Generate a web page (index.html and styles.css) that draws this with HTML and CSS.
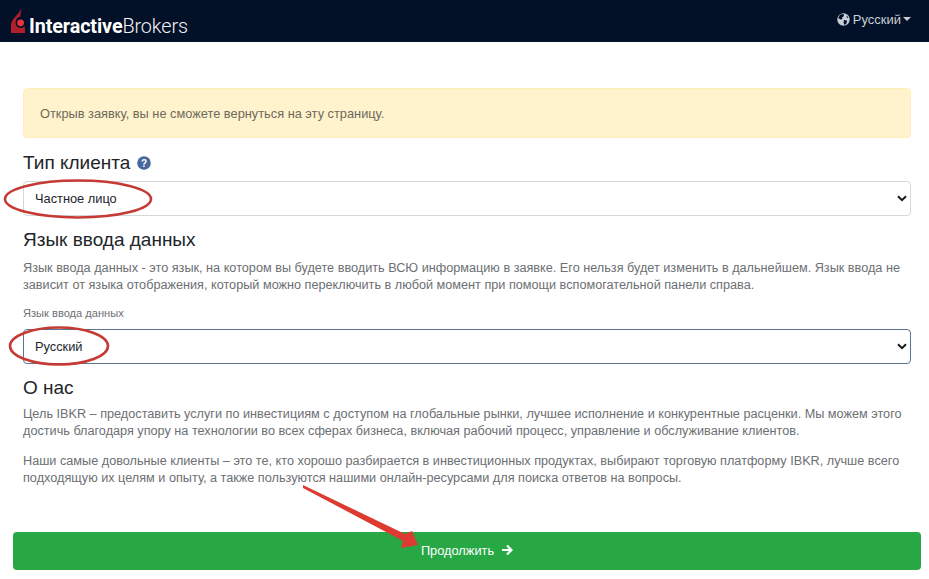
FILE: index.html
```html
<!DOCTYPE html>
<html lang="ru">
<head>
<meta charset="utf-8">
<title>Interactive Brokers</title>
<link rel="stylesheet" href="styles.css">
</head>
<body>
<header class="topbar">
  <div class="brand">
    <svg class="brand-mark" width="15" height="26" viewBox="0 0 15 26"><path d="M10.5 0 C10 3 9.5 6 9.3 8.5 C6.5 9 4.6 11.5 4.6 14.8 C4.6 17.8 7 20 9.6 20 C11.4 20 12.9 19.2 13.8 18 L14 25 L0 25 L0 16 C1 10.5 7.5 7 10.5 0 Z" fill="#b01f2c"/><circle cx="9.6" cy="14.8" r="3.4" fill="#ee3340"/></svg>
    <span class="brand-name"><b>Interactive</b>Brokers</span>
  </div>
  <div class="lang">
    <svg width="13" height="13" viewBox="0 0 13 13"><circle cx="6.5" cy="6.5" r="6.2" fill="#c9ced6"/><path d="M3 1.5 L6.5 1 L7 3 L5 4.5 L5.5 6 L3.5 6.5 L1.2 5 Z M7 7 L10 7.5 L9.5 10.5 L7.5 12 L6.5 9.5 Z M9.5 2.5 L11.5 4.5 L10 5 Z" fill="#021028"/></svg>
    <span>Русский</span>
    <i class="caret"></i>
  </div>
</header>
<main class="page">
  <div class="alert">Открыв заявку, вы не сможете вернуться на эту страницу.</div>
  <h2 class="title title-first">Тип клиента
    <svg class="help" width="14" height="14" viewBox="0 0 14 14"><circle cx="7" cy="7" r="6.8" fill="#47689c"/><text x="7" y="11" text-anchor="middle" class="help-mark">?</text></svg>
  </h2>
  <div class="field">
    <select class="select"><option>Частное лицо</option></select>
    <svg class="chevron" width="10" height="7" viewBox="0 0 10 7"><path d="M1 1.2 L5 5.2 L9 1.2" fill="none" stroke="#16181b" stroke-width="2"/></svg>
  </div>
  <h2 class="title title-lang">Язык ввода данных</h2>
  <p class="text text-lang">Язык ввода данных - это язык, на котором вы будете вводить ВСЮ информацию в заявке. Его нельзя будет изменить в дальнейшем. Язык ввода не зависит от языка отображения, который можно переключить в любой момент при помощи вспомогательной панели справа.</p>
  <label class="label">Язык ввода данных</label>
  <div class="field">
    <select class="select select-active"><option>Русский</option></select>
    <svg class="chevron" width="10" height="7" viewBox="0 0 10 7"><path d="M1 1.2 L5 5.2 L9 1.2" fill="none" stroke="#16181b" stroke-width="2"/></svg>
  </div>
  <h2 class="title title-about">О нас</h2>
  <p class="text text-about">Цель IBKR – предоставить услуги по инвестициям с доступом на глобальные рынки, лучшее исполнение и конкурентные расценки. Мы можем этого достичь благодаря упору на технологии во всех сферах бизнеса, включая рабочий процесс, управление и обслуживание клиентов.</p>
  <p class="text text-gap">Наши самые довольные клиенты – это те, кто хорошо разбирается в инвестиционных продуктах, выбирают торговую платформу IBKR, лучше всего подходящую их целям и опыту, а также пользуются нашими онлайн-ресурсами для поиска ответов на вопросы.</p>
</main>
<div class="actions">
  <button class="continue">Продолжить
    <svg width="12" height="12" viewBox="0 0 12 12"><path d="M1 6 H10 M6 1.5 L10.5 6 L6 10.5" fill="none" stroke="#ffffff" stroke-width="2.2"/></svg>
  </button>
</div>
<svg class="marks" width="929" height="579" viewBox="0 0 929 579">
  <ellipse cx="78" cy="199" rx="73" ry="18.5" fill="none" stroke="#c53a34" stroke-width="2.6"/>
  <ellipse cx="59" cy="346" rx="49" ry="18.5" fill="none" stroke="#c53a34" stroke-width="2.6"/>
  <path d="M303 485 L405 534 L412 531 L418 545 L401 548 L403 541 L303 488 Z" fill="#dd3b32"/>
</svg>
</body>
</html>
```
FILE: styles.css
```css
html, body { margin: 0; padding: 0; }
body {
  position: relative;
  width: 929px;
  height: 579px;
  overflow: hidden;
  background: #fff;
  font-family: "Liberation Sans", Arial, sans-serif;
  color: #212529;
}
.topbar {
  height: 42px;
  background: #021028;
  display: flex;
  align-items: flex-start;
  justify-content: space-between;
  padding: 0 18px 0 11px;
}
.brand { display: flex; align-items: center; height: 42px; gap: 3px; }
.brand-mark { align-self: flex-start; margin-top: 8px; }
.brand-name {
  font-family: Roboto, "Liberation Sans", sans-serif;
  font-size: 19.8px;
  font-weight: 300;
  color: #f1f3f6;
  letter-spacing: -0.1px;
  margin-top: 11px;
}
.brand-name b { font-weight: 700; color: #fff; }
.lang {
  display: flex;
  align-items: center;
  gap: 3px;
  margin-top: 12px;
  font-size: 13px;
  color: #c9ced6;
}
.caret {
  width: 0; height: 0;
  border-left: 4px solid transparent;
  border-right: 4px solid transparent;
  border-top: 4px solid #c9ced6;
  margin: -2px 0 0 -1px;
}
.page { padding: 46px 18px 0 23px; }
.alert {
  box-sizing: border-box;
  height: 50px;
  padding: 0 16px;
  display: flex;
  align-items: center;
  background: #fff3cd;
  border: 1px solid #ffeeba;
  border-radius: 4px;
  font-size: 12.8px;
  color: #6e6a5a;
}
.title { margin: 0; font-size: 19px; font-weight: 400; line-height: 22px; color: #212529; }
.title-first { margin-top: 14px; display: flex; align-items: center; gap: 7px; }
.title-lang { margin-top: 13px; }
.title-about { margin-top: 13px; }
.help-mark { font: bold 10px "Liberation Sans", sans-serif; fill: #fff; }
.field { position: relative; margin-top: 7px; height: 35px; }
.select {
  appearance: none;
  box-sizing: border-box;
  display: block;
  width: 100%;
  height: 35px;
  padding: 0 11px;
  background: #fff;
  border: 1px solid #d4d7da;
  border-radius: 4px;
  font: 12.8px "Liberation Sans", sans-serif;
  color: #212529;
}
.select-active { border-color: #5b7491; }
.chevron { position: absolute; right: 4px; top: 14px; }
.text { margin: 0; font-size: 12.68px; line-height: 17px; color: #6c6f73; }
.text-lang { margin-top: 9px; }
.text-about { margin-top: 7px; }
.text-gap { margin-top: 13px; }
.label { display: block; margin-top: 13px; font-size: 11.1px; line-height: 13px; color: #6c6f73; }
.label + .field { margin-top: 9px; }
.actions { position: absolute; left: 13px; top: 532px; width: 908px; }
.continue {
  box-sizing: border-box;
  display: flex;
  align-items: center;
  justify-content: center;
  gap: 7px;
  width: 100%;
  height: 38px;
  padding: 0 0 2px;
  background: #28a745;
  border: 0;
  border-radius: 4px;
  font: 12.8px "Liberation Sans", sans-serif;
  color: #fff;
}
.marks { position: absolute; left: 0; top: 0; pointer-events: none; }
```
